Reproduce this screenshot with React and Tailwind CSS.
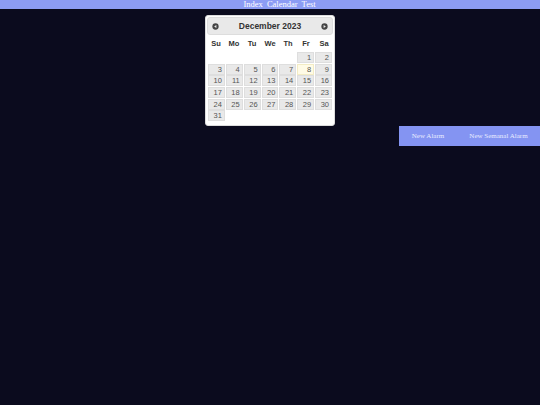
import React from "react";

const Arrow = ({ dir }) => (
  <svg width="7" height="7" viewBox="0 0 8 8">
    <circle cx="4" cy="4" r="3.6" fill="#444" />
    {dir === "left" ? (
      <polygon points="2.4,4 5,2.3 5,5.7" fill="#e9e9e9" />
    ) : (
      <polygon points="5.6,4 3,2.3 3,5.7" fill="#e9e9e9" />
    )}
  </svg>
);

export default function App() {
  const names = ["Su", "Mo", "Tu", "We", "Th", "Fr", "Sa"];
  const cells = [];
  for (let i = 0; i < 5; i++) cells.push(null);
  for (let d = 1; d <= 31; d++) cells.push(d);
  while (cells.length < 42) cells.push(null);
  const rows = [];
  for (let r = 0; r < 6; r++) rows.push(cells.slice(r * 7, r * 7 + 7));

  return (
    <div className="min-h-[405px] w-[540px] bg-[#0b0b1e] flex flex-col">
      <div className="h-[9px] bg-[#8c9cf4] flex items-start justify-center pl-[19px]">
        <span className="text-[8.5px] leading-[9px] text-white font-['Liberation_Serif',serif] [word-spacing:2px]">
          Index Calendar Test
        </span>
      </div>
      <div className="flex justify-center mt-[6px]">
        <div className="w-[130px] h-[111px] bg-white border border-[#dddddd] rounded-[3px] p-[1px] font-['Liberation_Sans',sans-serif]">
          <div className="h-[18px] bg-[#e9e9e9] border border-[#dddddd] rounded-[3px] flex items-center justify-between px-[4px]">
            <Arrow dir="left" />
            <span className="text-[8.5px] font-bold text-[#333333]">December 2023</span>
            <Arrow dir="right" />
          </div>
          <div className="grid grid-cols-7 h-[16px] items-center mt-[1px] text-[7.5px] font-bold text-[#333333]">
            {names.map((n) => (
              <div key={n} className="text-center">{n}</div>
            ))}
          </div>
          <div className="flex flex-col gap-[1px] px-[1px]">
            {rows.map((row, ri) => (
              <div key={ri} className="grid grid-cols-7 gap-x-[1px] h-[10.7px]">
                {row.map((d, ci) =>
                  d === null ? (
                    <div key={ci} />
                  ) : (
                    <div
                      key={ci}
                      className={
                        d === 8
                          ? "bg-[#fffbe6] border border-[#f3ecc4] text-[#555] text-[7.5px] leading-[9px] text-right pr-[2px]"
                          : "bg-[#e9e9e9] border border-[#dedede] text-[#555] text-[7.5px] leading-[9px] text-right pr-[2px]"
                      }
                    >
                      {d}
                    </div>
                  )
                )}
              </div>
            ))}
          </div>
        </div>
      </div>
      <div className="flex justify-end">
        <div className="flex bg-[#8494f2] h-[20px] w-[141px] font-['Liberation_Serif',serif] text-[7px] text-[#e8ecff]">
          <div className="w-[58px] flex items-center justify-center">New Alarm</div>
          <div className="flex-1 flex items-center justify-center">New Semanal Alarm</div>
        </div>
      </div>
    </div>
  );
}
